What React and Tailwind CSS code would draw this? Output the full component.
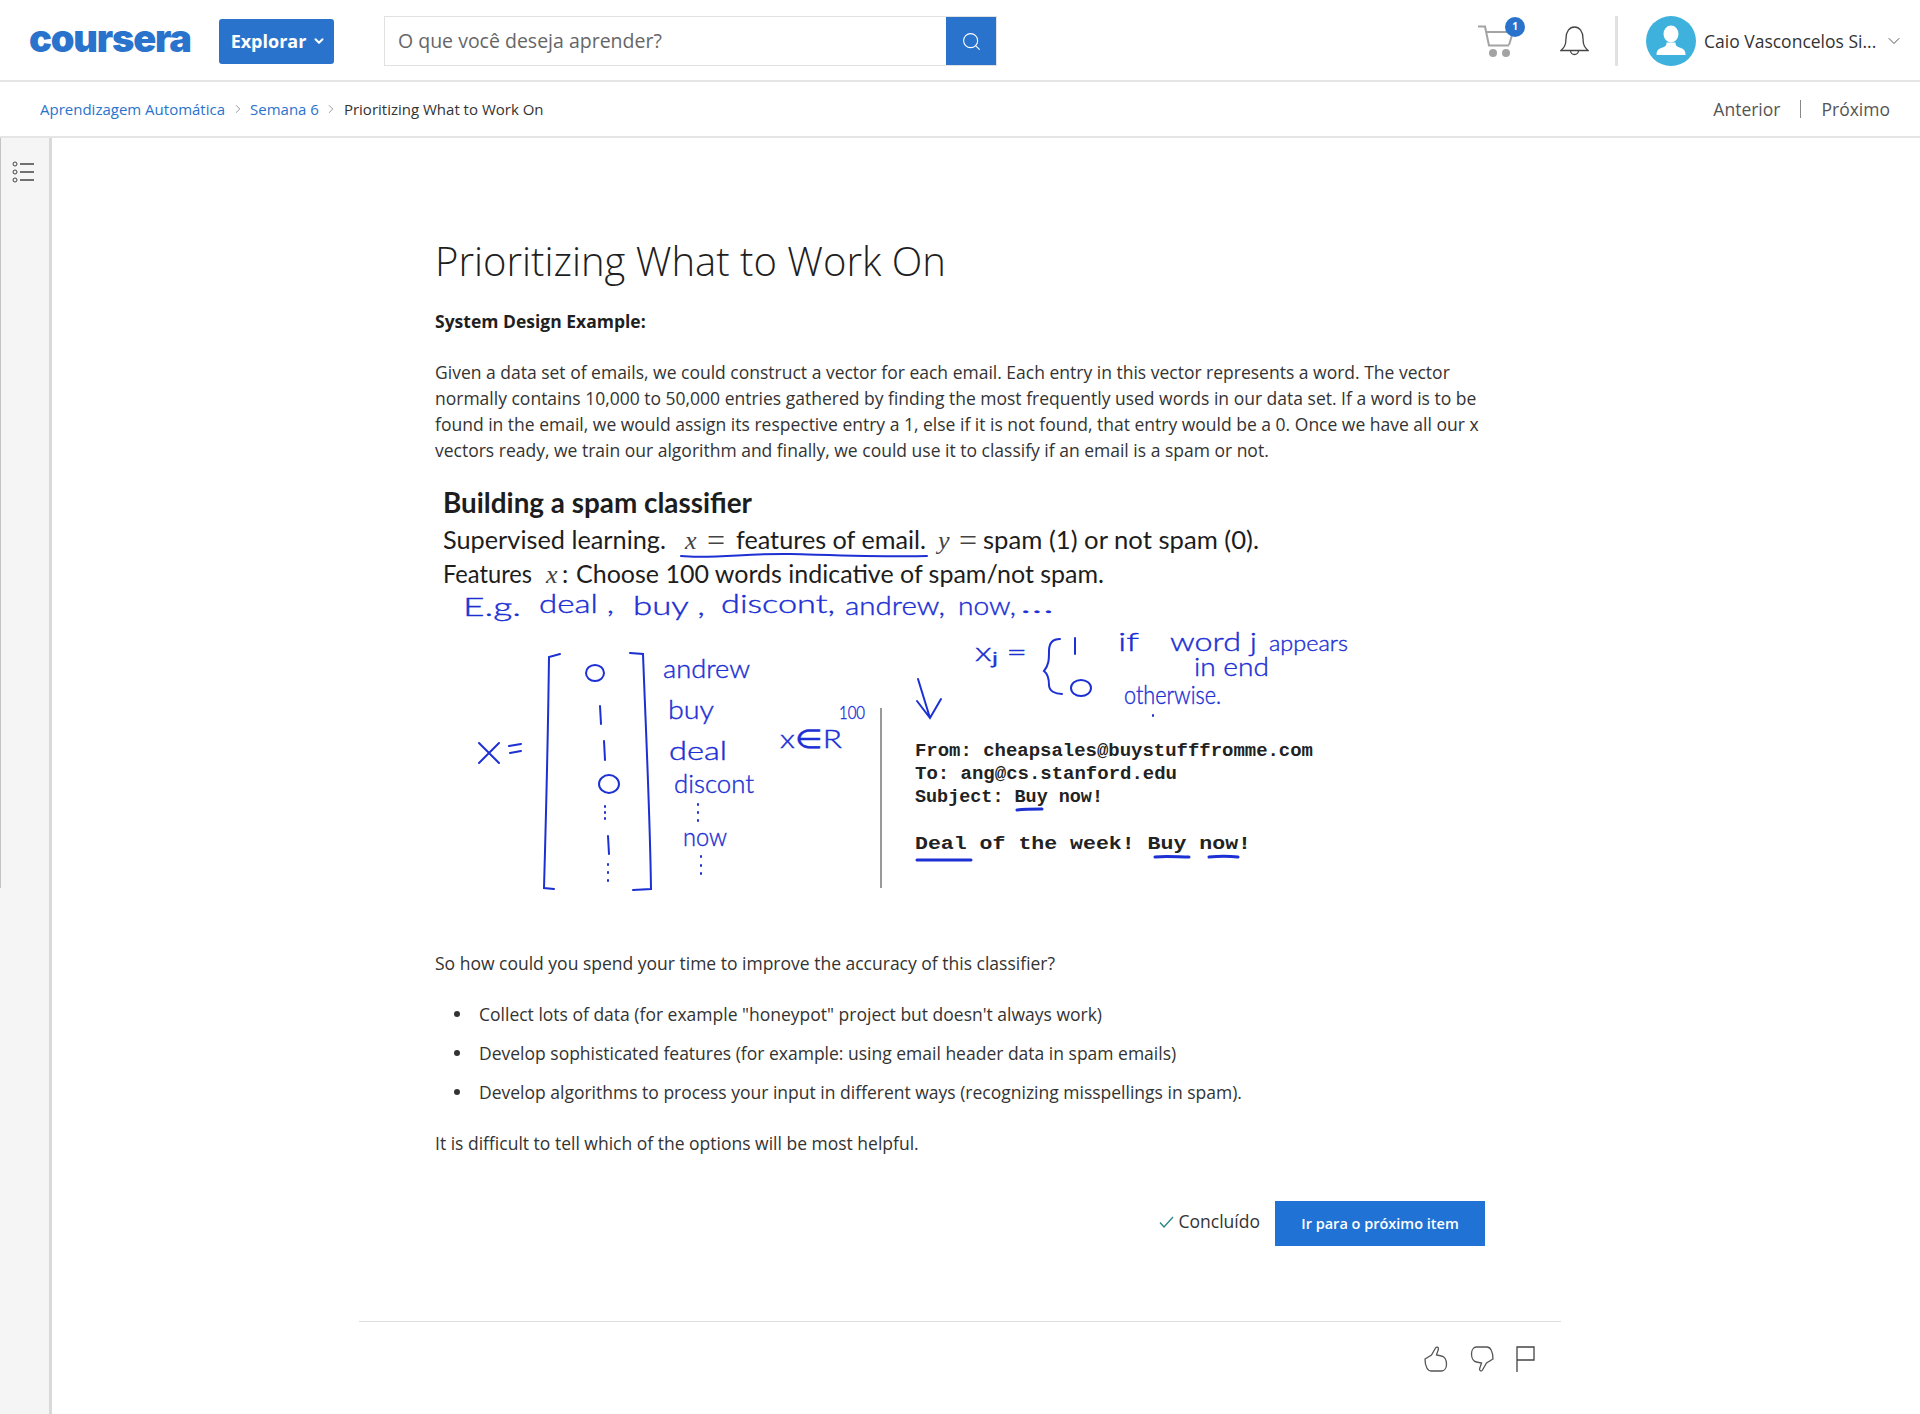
import { ChevronDown, ChevronRight, Search } from 'lucide-react'

const BLUE = '#1c30d4'

function CartIcon() {
  return (
    <svg width="36" height="33" viewBox="0 0 36 33" fill="none" stroke="#a3a3a3" strokeWidth="2">
      <path d="M0 1.500h7l4 19h20" />
      <path d="M8 7h27l-4 13" />
      <circle cx="15" cy="28" r="4" fill="#a3a3a3" stroke="none" />
      <circle cx="28" cy="28" r="4" fill="#a3a3a3" stroke="none" />
    </svg>
  )
}

function BellIcon() {
  return (
    <svg width="29" height="31" viewBox="0 0 29 31" fill="none" stroke="#444" strokeWidth="1.3">
      <path d="M1 24.500c3-3 5-5 5-12C6 5.500 9.500 1 14.500 1S23 5.500 23 12.500c0 7 2 9 5 12z" />
      <path d="M10.500 24.500a4 4 0 0 0 8 0" />
    </svg>
  )
}

function ThumbIcon({ flip }) {
  return (
    <svg
      width="24"
      height="26"
      viewBox="0 0 24 26"
      fill="none"
      stroke="#555"
      strokeWidth="1.3"
      className={flip ? 'rotate-180' : ''}
    >
      <path d="M1 13l6.500-4 4-7c1-1.500 3-1 3 1l-2 6 5 1c3 .5 5 4 5 8 0 4-2 7-5 7H7c-3 0-6-4-6-12z" />
    </svg>
  )
}

function SpamSlide() {
  return (
    <svg viewBox="435 480 925 420" width="925" height="420" className="block">
      <g fontFamily="Lato, sans-serif" fill="#1d1d1d">
        <text x="443" y="512" fontSize="28" fontWeight="700" textLength="309" lengthAdjust="spacingAndGlyphs">Building a spam classifier</text>
        <text x="443" y="548" fontSize="25" textLength="223" lengthAdjust="spacingAndGlyphs">Supervised learning.</text>
        <text x="736" y="548" fontSize="25" textLength="190" lengthAdjust="spacingAndGlyphs">features of email.</text>
        <text x="983" y="548" fontSize="25" textLength="276" lengthAdjust="spacingAndGlyphs">spam (1) or not spam (0).</text>
        <text x="443" y="582" fontSize="25" textLength="89" lengthAdjust="spacingAndGlyphs">Features</text>
        <text x="576" y="582" fontSize="25" textLength="528" lengthAdjust="spacingAndGlyphs">Choose 100 words indicative of spam/not spam.</text>
        <text x="562" y="582" fontSize="25">:</text>
      </g>
      <g fontFamily="'Liberation Serif', serif" fontStyle="italic" fontSize="26" fill="#444">
        <text x="685" y="548">x</text>
        <text x="938" y="548">y</text>
        <text x="546" y="582">x</text>
      </g>
      <g fontFamily="'Liberation Serif', serif" fontSize="32" fill="#444">
        <text x="707" y="550">=</text>
        <text x="959" y="550">=</text>
      </g>

      <g fontFamily="Lato, sans-serif" fontWeight="300" fill={BLUE} stroke={BLUE} strokeWidth="0.4">
        <g fontSize="26">
          <text x="463" y="615" textLength="58" lengthAdjust="spacingAndGlyphs">E.g.</text>
          <text x="539" y="612" textLength="75" lengthAdjust="spacingAndGlyphs">deal ,</text>
          <text x="633" y="614" textLength="72" lengthAdjust="spacingAndGlyphs">buy ,</text>
          <text x="721" y="612" textLength="114" lengthAdjust="spacingAndGlyphs">discont,</text>
          <text x="845" y="614" textLength="100" lengthAdjust="spacingAndGlyphs">andrew,</text>
          <text x="958" y="614" textLength="58" lengthAdjust="spacingAndGlyphs">now,</text>
          <text x="1020" y="612" textLength="34" lengthAdjust="spacingAndGlyphs">...</text>
          <text x="663" y="677" textLength="87" lengthAdjust="spacingAndGlyphs">andrew</text>
          <text x="668" y="718" textLength="46" lengthAdjust="spacingAndGlyphs">buy</text>
          <text x="669" y="759" textLength="58" lengthAdjust="spacingAndGlyphs">deal</text>
          <text x="674" y="792" textLength="80" lengthAdjust="spacingAndGlyphs">discont</text>
          <text x="683" y="845" textLength="44" lengthAdjust="spacingAndGlyphs">now</text>
          <text x="780" y="747" textLength="62" lengthAdjust="spacingAndGlyphs">x∈R</text>
          <text x="975" y="660" textLength="52" lengthAdjust="spacingAndGlyphs">xⱼ =</text>
          <text x="1118" y="650" textLength="21" lengthAdjust="spacingAndGlyphs">if</text>
          <text x="1170" y="650" textLength="87" lengthAdjust="spacingAndGlyphs">word j</text>
          <text x="1194" y="675" textLength="75" lengthAdjust="spacingAndGlyphs">in end</text>
          <text x="1124" y="703" textLength="97" lengthAdjust="spacingAndGlyphs">otherwise.</text>
        </g>
        <text x="1269" y="650" fontSize="22" textLength="79" lengthAdjust="spacingAndGlyphs">appears</text>
        <text x="839" y="718" fontSize="18" textLength="26" lengthAdjust="spacingAndGlyphs">100</text>
      </g>

      <g fill="none" stroke={BLUE} strokeWidth="2" strokeLinecap="round">
        <path d="M681 555c30 3 70-3 110-2 40 1 90 3 136 2" />
        <path d="M560 653l-11 3c-1 80-3 160-5 231l10 1" />
        <path d="M630 652l13 1c3 80 7 160 8 235l-18 1" />
        <path d="M479 742l20 20M499 742l-20 20M509 745l12-2M510 752l11-2" />
        <ellipse cx="595" cy="672" rx="9" ry="8" />
        <ellipse cx="609" cy="783" rx="10" ry="9" />
        <path d="M600 705l1 18M604 740l1 19M608 835l1 18" />
        <path d="M605 805v1M605 811v1M605 817v1M608 863v1M608 871v1M608 879v1" />
        <path d="M698 803v1M698 811v1M698 819v1M701 855v1M701 864v1M701 872v1" />
        <path d="M918 678l12 39M917 700l13 17 11-19" />
        <path d="M1060 638c-8 0-11 4-11 12 0 8 0 14-5 20 5 4 5 10 5 14 0 6 6 9 13 9" />
        <path d="M1075 637v16" />
        <ellipse cx="1081" cy="687" rx="10" ry="8" />
        <path d="M1153 714v1" />
        <path d="M917 859h54M1155 856c10-1 24 0 34 0M1209 856c10-1 20-1 29 0M1017 809c8-1 18-1 25-1" strokeWidth="3" />
      </g>
      <path d="M881 707V887" stroke="#555" strokeWidth="1.200" />

      <g fontFamily="'Liberation Mono', monospace" fontWeight="700" fontSize="19" fill="#222">
        <text x="915" y="755" textLength="398" lengthAdjust="spacingAndGlyphs">From: cheapsales@buystufffromme.com</text>
        <text x="915" y="778" textLength="262" lengthAdjust="spacingAndGlyphs">To: ang@cs.stanford.edu</text>
        <text x="915" y="801" textLength="188" lengthAdjust="spacingAndGlyphs">Subject: Buy now!</text>
        <text x="915" y="848" textLength="336" lengthAdjust="spacingAndGlyphs">Deal of the week! Buy now!</text>
      </g>
    </svg>
  )
}

function Header() {
  return (
    <header className="flex h-[82px] items-center border-b-2 border-[#e5e5e5] bg-white pt-0.5">
      <span className="mb-[7px] ml-[29px] w-[160px] font-['Inter',sans-serif] text-[38px] leading-none font-black tracking-[-1.2px] text-[#2a73cc]">
        coursera
      </span>
      <button className="ml-[30px] flex h-[45px] w-[115px] items-center justify-center gap-1.5 rounded-[3px] bg-[#2a73cc] pl-1 text-[18px] font-bold text-white">
        Explorar
        <ChevronDown size={14} strokeWidth={3.5} />
      </button>
      <div className="ml-[50px] flex h-[50px] w-[613px] border border-[#e1e1e1]">
        <span className="flex-1 self-center pl-[13px] text-[19.5px] text-[#666]">O que você deseja aprender?</span>
        <span className="flex w-[50px] items-center justify-center bg-[#2a73cc] text-white">
          <Search size={21} strokeWidth={1.2} />
        </span>
      </div>
      <div className="relative ml-[481px]">
        <CartIcon />
        <span className="absolute -top-[8px] -right-[11px] flex h-5 w-5 items-center justify-center rounded-full bg-[#2a73cc] text-[10px] font-bold text-white">
          1
        </span>
      </div>
      <span className="ml-[46px]">
        <BellIcon />
      </span>
      <span className="ml-[26px] h-[50px] w-[3px] bg-[#e1e1e1]" />
      <div className="ml-[28px] h-[50px] w-[50px] overflow-hidden rounded-full bg-[#3eb1dc]">
        <svg width="50" height="50" viewBox="0 0 50 50" fill="white">
          <ellipse cx="25" cy="18" rx="7.500" ry="8.500" />
          <path d="M10.500 39c0-5 2-6 6-7.500 3-1 4-2 4-5h9c0 3 1 4 4 5 4 1.500 6 2.500 6 7.500z" />
        </svg>
      </div>
      <span className="ml-2 w-[174px] text-[17.5px] whitespace-nowrap text-[#333]">Caio Vasconcelos Si...</span>
      <ChevronDown size={20} strokeWidth={1} className="ml-[6px] text-[#333]" />
    </header>
  )
}

function Breadcrumb() {
  return (
    <nav className="flex h-[56px] items-center justify-between border-b-2 border-[#e5e5e5] bg-white pl-10 pr-[30px]">
      <div className="flex items-center text-[15px]">
        <a className="text-[#2a73cc]">Aprendizagem Automática</a>
        <ChevronRight size={14} strokeWidth={1} className="mx-[5.5px] text-[#555]" />
        <a className="text-[#2a73cc]">Semana 6</a>
        <ChevronRight size={14} strokeWidth={1} className="mx-[5.5px] text-[#555]" />
        <span className="text-[#333]">Prioritizing What to Work On</span>
      </div>
      <div className="flex items-center text-[17.5px] text-[#555]">
        <span>Anterior</span>
        <span className="mx-5 h-[18px] w-px bg-[#888]" />
        <span>Próximo</span>
      </div>
    </nav>
  )
}

function Sidebar() {
  return (
    <aside className="relative w-[52px] shrink-0 border-r-[3px] border-[#d9d9d9] bg-[#f5f5f5]">
      <span className="absolute top-0 left-0 h-[750px] w-px bg-[#c4c4c4]" />
      <svg width="22" height="24" viewBox="0 0 22 24" fill="none" stroke="#444" className="mt-[23px] ml-[12px]">
        <circle cx="3" cy="3" r="2" />
        <circle cx="3" cy="11" r="2" />
        <circle cx="3" cy="19" r="2" />
        <path d="M8 3h14M8 11h14M8 19h14" strokeWidth="1.500" />
      </svg>
    </aside>
  )
}

const bullets = [
  'Collect lots of data (for example "honeypot" project but doesn\'t always work)',
  'Develop sophisticated features (for example: using email header data in spam emails)',
  'Develop algorithms to process your input in different ways (recognizing misspellings in spam).',
]

export default function App() {
  return (
    <div className="flex min-h-[1414px] flex-col bg-white font-['Open_Sans',sans-serif] text-[#333]">
      <Header />
      <Breadcrumb />
      <div className="flex flex-1">
        <Sidebar />
        <main className="ml-[307px] w-[1202px]">
          <div className="ml-[76px] w-[1050px]">
            <h1 className="mt-[96px] text-[40px] leading-[54px] font-light text-[#1f1f1f]">
              Prioritizing What to Work On
            </h1>
            <p className="mt-[20px] text-[17.5px] leading-[26px] font-bold text-[#1f1f1f]">System Design Example:</p>
            <p className="mt-[25px] text-[17.5px] leading-[26px]">
              Given a data set of emails, we could construct a vector for each email. Each entry in this vector
              represents a word. The vector normally contains 10,000 to 50,000 entries gathered by finding the most
              frequently used words in our data set. If a word is to be found in the email, we would assign its
              respective entry a 1, else if it is not found, that entry would be a 0. Once we have all our x vectors
              ready, we train our algorithm and finally, we could use it to classify if an email is a spam or not.
            </p>
            <div className="mt-[18px]">
              <SpamSlide />
            </div>
            <p className="mt-[49px] text-[17.5px] leading-[26px]">
              So how could you spend your time to improve the accuracy of this classifier?
            </p>
            <ul className="mt-[25px] flex flex-col gap-[13px] pl-[19px] text-[17.5px] leading-[26px]">
              {bullets.map((b) => (
                <li key={b} className="flex items-start">
                  <span className="mt-[10px] mr-[19px] h-1.5 w-1.5 shrink-0 rounded-full bg-[#333]" />
                  {b}
                </li>
              ))}
            </ul>
            <p className="mt-[25px] text-[17.5px] leading-[26px]">
              It is difficult to tell which of the options will be most helpful.
            </p>
            <div className="mt-[45px] flex items-center justify-end">
              <svg width="15" height="12" viewBox="0 0 15 12" fill="none" stroke="#2a8a85" strokeWidth="1.4" className="mr-[5px] -translate-y-0.5">
                <path d="M1 6.500l4 4.500 9-10" />
              </svg>
              <span className="-translate-y-0.5 text-[17.5px] text-[#333]">Concluído</span>
              <button className="ml-[15px] h-[45px] w-[210px] bg-[#2073d4] text-[14.5px] font-semibold text-white">
                Ir para o próximo item
              </button>
            </div>
          </div>
          <div className="mt-[75px] flex justify-end gap-[22px] border-t border-[#dedede] pt-[24px] pr-[26px]">
            <ThumbIcon />
            <ThumbIcon flip />
            <svg width="19" height="26" viewBox="0 0 19 26" fill="none" stroke="#444" strokeWidth="1.300">
              <path d="M1 26V1h17v13H1" />
            </svg>
          </div>
        </main>
      </div>
    </div>
  )
}
